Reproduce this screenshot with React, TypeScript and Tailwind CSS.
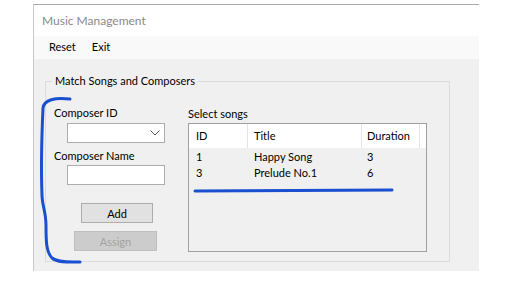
import React from "react";

export default function App() {
  return (
    <div className="relative w-[507px] h-[302px] bg-white overflow-hidden font-['Lato',sans-serif] text-[11px] text-black">
      <div className="ml-[33px] mt-[4px] w-[446px] h-[267px] flex flex-col border-t border-l border-[#c8c8c8] border-t-[#aaaaaa]">
        <div className="h-[31px] bg-white flex items-center pl-[8px] text-[12px] text-[#8a8a8a]">
          Music Management
        </div>
        <div className="h-[23px] bg-[#f9f9f9] flex items-center pl-[15px] gap-[16px]">
          <span>Reset</span>
          <span>Exit</span>
        </div>
        <div className="flex-1 bg-[#f0f0f0] pt-[22px] pl-[11px]">
          <div className="relative w-[405px] h-[181px] border border-[#dcdcdc] flex">
            <span className="absolute -top-[9px] left-[6px] px-[3px] bg-[#f0f0f0] leading-[16px]">
              Match Songs and Composers
            </span>
            <div className="w-[142px] flex flex-col items-start">
              <div className="mt-[23px] ml-[8px] h-[16px] leading-[16px]">Composer ID</div>
              <div className="mt-[2px] ml-[21px] w-[98px] h-[20px] bg-white border border-[#adadad] flex items-center justify-end pr-[4px]">
                <svg width="10" height="6" viewBox="0 0 10 6">
                  <path d="M0.5 0.5 L5 5 L9.5 0.5" fill="none" stroke="#555" strokeWidth="1" />
                </svg>
              </div>
              <div className="mt-[5px] ml-[8px] h-[16px] leading-[16px]">Composer Name</div>
              <div className="mt-[1px] ml-[21px] w-[98px] h-[20px] bg-white border border-[#adadad]" />
              <div className="mt-[18px] ml-[35px] w-[72px] h-[20px] bg-[#e1e1e1] border border-[#adadad] flex items-center justify-center leading-none">
                Add
              </div>
              <div className="mt-[8px] ml-[28px] w-[83px] h-[20px] bg-[#cccccc] border border-[#bfbfbf] flex items-center justify-center leading-none text-[#a3a3a3]">
                Assign
              </div>
            </div>
            <div className="flex flex-col items-start">
              <div className="mt-[24px] h-[16px] leading-[16px]">Select songs</div>
              <div className="mt-[1px] w-[239px] h-[129px] border border-[#a0a0a0] bg-[#f0f0f0] flex flex-col">
                <div className="h-[24px] bg-white flex">
                  <div className="w-[59px] border-r border-[#e5e5e5] pl-[7px] flex items-center">ID</div>
                  <div className="w-[114px] border-r border-[#e5e5e5] pl-[6px] flex items-center">Title</div>
                  <div className="w-[58px] border-r border-[#e5e5e5] pl-[5px] flex items-center">Duration</div>
                </div>
                <div className="mt-[1px] flex h-[16px] items-center">
                  <div className="w-[59px] pl-[7px]">1</div>
                  <div className="w-[114px] pl-[6px]">Happy Song</div>
                  <div className="w-[58px] pl-[5px]">3</div>
                </div>
                <div className="flex h-[16px] items-center">
                  <div className="w-[59px] pl-[7px]">3</div>
                  <div className="w-[114px] pl-[6px]">Prelude No.1</div>
                  <div className="w-[58px] pl-[5px]">6</div>
                </div>
              </div>
            </div>
          </div>
        </div>
      </div>
      <svg className="absolute inset-0 pointer-events-none" width="507" height="302" viewBox="0 0 507 302">
        <path
          d="M70 99 C 55 97, 44 100, 43 108 C 42 130, 41 170, 42 195 C 42 205, 46 212, 46 225 C 46 240, 46 252, 52 258 C 58 263, 70 262, 80 262"
          fill="none"
          stroke="#1a4fd0"
          strokeWidth="3"
          strokeLinecap="round"
        />
        <path d="M195 191 L392 190" fill="none" stroke="#1a4fd0" strokeWidth="3" strokeLinecap="round" />
      </svg>
    </div>
  );
}
